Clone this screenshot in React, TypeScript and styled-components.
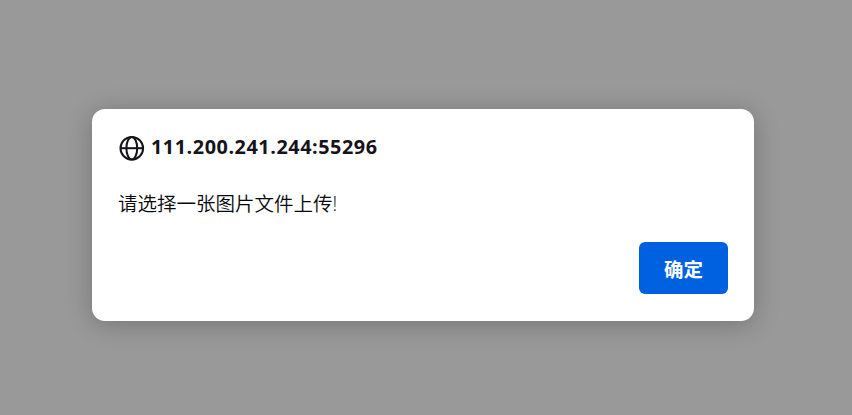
import React from 'react';
import styled, { createGlobalStyle } from 'styled-components';

const GlobalStyle = createGlobalStyle`
  * { box-sizing: border-box; }
  body { margin: 0; background: #99999a; overflow: hidden; }
`;

const Backdrop = styled.main`
  width: 852px;
  height: 415px;
  padding: 109px 98px 94px 92px;
  background: #99999a;
`;

const Dialog = styled.section`
  display: flex;
  flex-direction: column;
  height: 212px;
  padding: 26px;
  background: #fff;
  border-radius: 13px;
  box-shadow: 0 3px 26px rgba(0, 0, 0, 0.24);
  color: #15141a;
`;

const Header = styled.header`
  display: flex;
  align-items: center;
  gap: 6px;
  height: 26px;
`;

const Origin = styled.h1`
  margin: 0;
  padding-bottom: 2px;
  font: 700 19.8px/26px 'Open Sans', 'Noto Sans', sans-serif;
  letter-spacing: 0.56px;
  white-space: nowrap;
`;

const Message = styled.p`
  margin: 30px 0 0;
  font: 350 19.5px/26px 'Open Sans', 'Noto Sans CJK SC', sans-serif;
  color: #08070c;
  white-space: nowrap;
`;

const Actions = styled.footer`
  display: flex;
  justify-content: flex-end;
  margin-top: 25px;
`;

const ConfirmButton = styled.button`
  width: 89px;
  height: 52px;
  padding: 2px 0 0;
  border: 0;
  border-radius: 6px;
  background: #0061e0;
  color: #fbfbfe;
  font: 700 19.5px/26px 'Noto Sans CJK SC', sans-serif;
`;

const GlobeIcon = () => (
  <svg width="27" height="26" viewBox="0 0 27 26" fill="none" stroke="#15141a" strokeWidth="2">
    <circle cx="13.8" cy="13.2" r="11.3" />
    <ellipse cx="13.8" cy="13.2" rx="5.4" ry="11.3" />
    <path d="M2.5 13.2h22.6" />
  </svg>
);

export default function App() {
  return (
    <>
      <GlobalStyle />
      <Backdrop>
        <Dialog role="alertdialog">
          <Header>
            <GlobeIcon />
            <Origin>111.200.241.244:55296</Origin>
          </Header>
          <Message>请选择一张图片文件上传!</Message>
          <Actions>
            <ConfirmButton>确定</ConfirmButton>
          </Actions>
        </Dialog>
      </Backdrop>
    </>
  );
}
